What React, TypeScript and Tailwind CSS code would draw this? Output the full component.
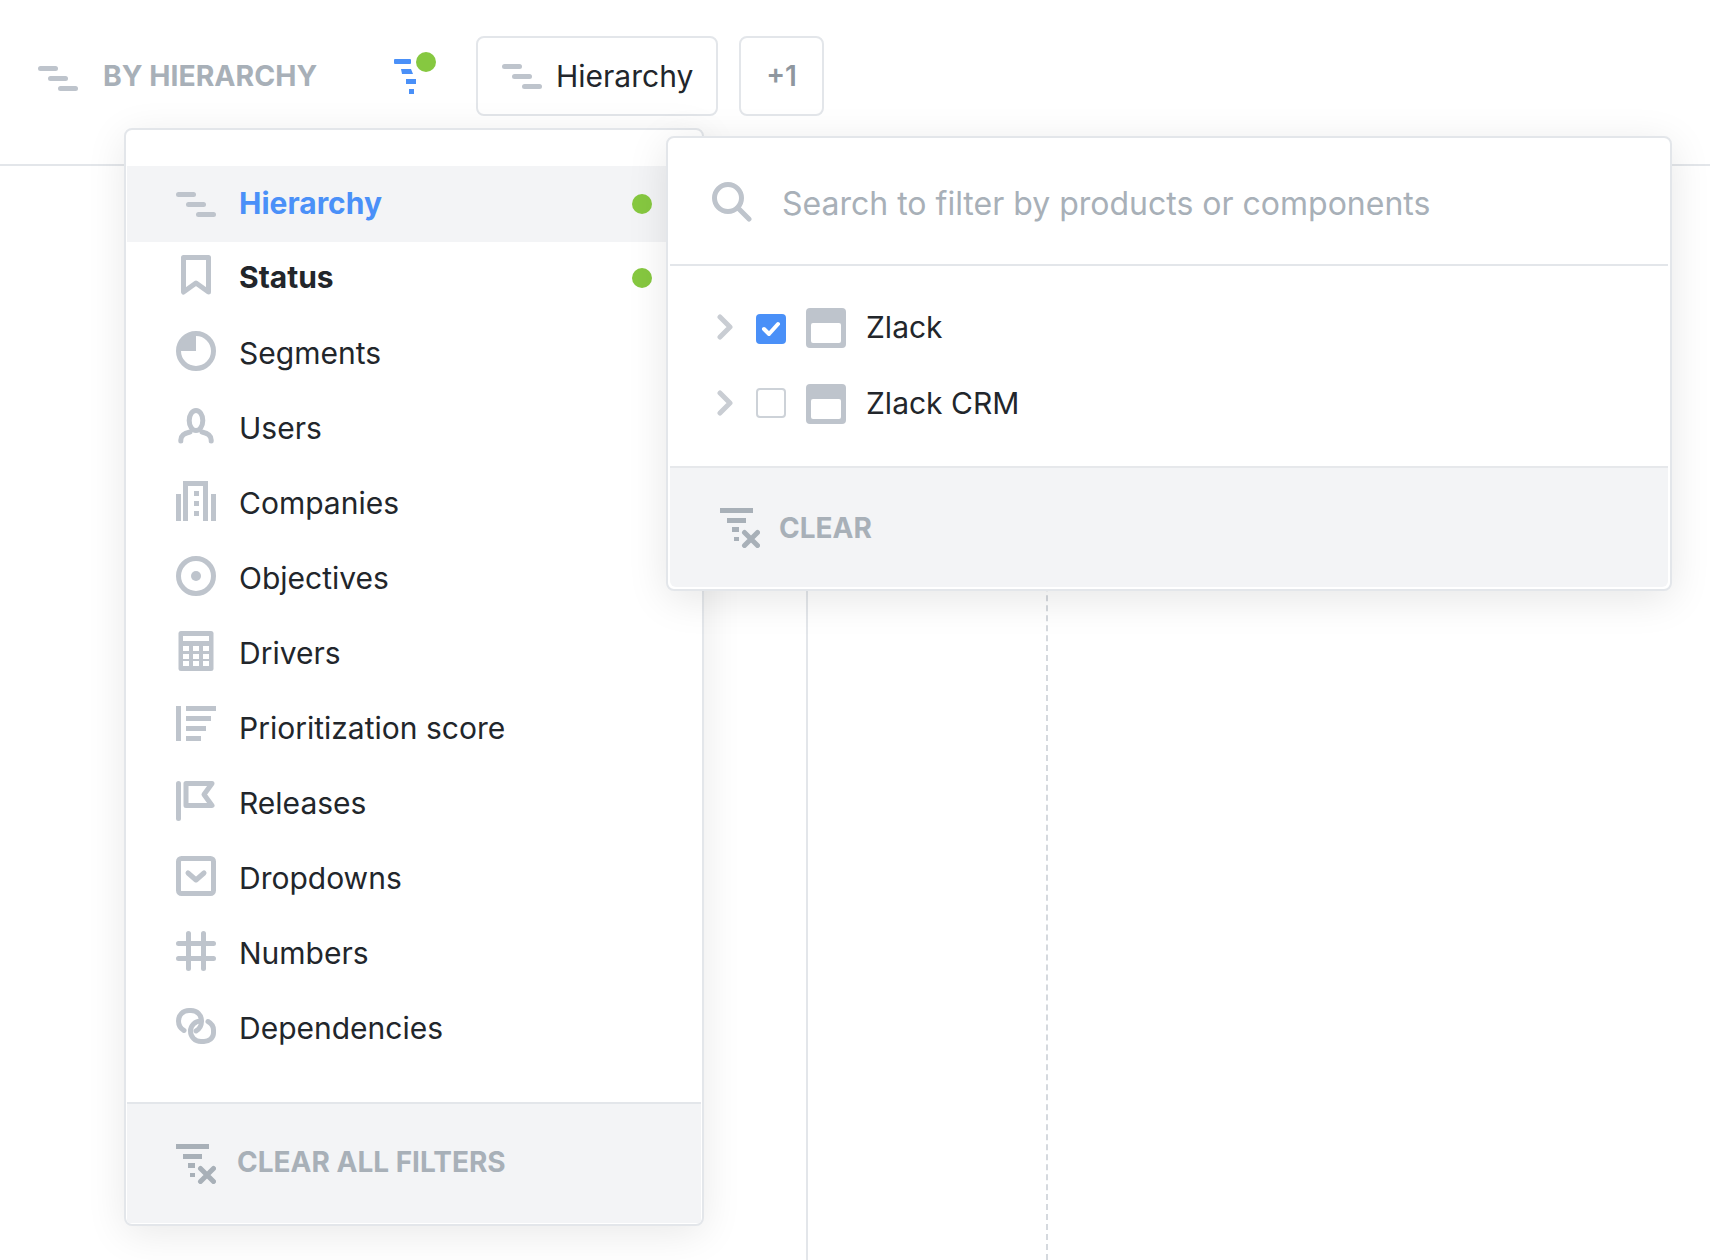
import React from "react";

const G = "#bec4cc";

function Ic({ children, w = 40, h = 40, className = "" }: { children: React.ReactNode; w?: number; h?: number; className?: string }) {
  return (
    <svg width={w} height={h} viewBox={`0 0 ${w} ${h}`} fill="none" className={`shrink-0 block ${className}`}>
      {children}
    </svg>
  );
}

const HierIcon = () => (
  <Ic h={25}>
    <rect x="0" y="0" width="20" height="5" rx="2.5" fill={G} />
    <rect x="10" y="10" width="20" height="5" rx="2.5" fill={G} />
    <rect x="20" y="20" width="20" height="5" rx="2.5" fill={G} />
  </Ic>
);

const icons: Record<string, React.ReactNode> = {
  Status: (
    <Ic>
      <path d="M7.5 2.5 H32.5 V37 L20 28 L7.5 37 Z" stroke={G} strokeWidth="5" strokeLinejoin="round" />
    </Ic>
  ),
  Segments: (
    <Ic>
      <circle cx="20" cy="20" r="17.5" stroke={G} strokeWidth="5" />
      <path d="M20 2 A18 18 0 0 0 2 20 H20 Z" fill={G} />
    </Ic>
  ),
  Users: (
    <Ic>
      <ellipse cx="20" cy="14.5" rx="6.8" ry="10" stroke={G} strokeWidth="5" />
      <path d="M4.8 35 V34 C4.8 29 9 27 14 26 M35.2 35 V34 C35.2 29 31 27 26 26" stroke={G} strokeWidth="5" strokeLinecap="round" />
    </Ic>
  ),
  Companies: (
    <Ic>
      <path d="M9.5 40 V2.5 H29.5 V40" stroke={G} strokeWidth="5" />
      <rect x="0" y="13" width="5" height="27" fill={G} />
      <rect x="35" y="13" width="5" height="27" fill={G} />
      <rect x="18" y="10" width="5" height="5" fill={G} />
      <rect x="18" y="20" width="5" height="5" fill={G} />
      <rect x="18" y="30" width="5" height="5" fill={G} />
    </Ic>
  ),
  Objectives: (
    <Ic>
      <circle cx="20" cy="20" r="17.5" stroke={G} strokeWidth="5" />
      <circle cx="20" cy="20" r="5" fill={G} />
    </Ic>
  ),
  Drivers: (
    <Ic>
      <rect x="2.5" y="0" width="35" height="40" rx="2.5" fill={G} />
      <rect x="7" y="5" width="26" height="5" fill="#fff" />
      {[7, 17, 27].map((x) =>
        [15, 23, 30].map((y) => <rect key={`${x}-${y}`} x={x} y={y} width="6" height="5" fill="#fff" />)
      )}
    </Ic>
  ),
  "Prioritization score": (
    <Ic>
      <rect x="0" y="0" width="5" height="35" fill={G} />
      <rect x="10" y="0" width="30" height="5" fill={G} />
      <rect x="10" y="10" width="25" height="5" fill={G} />
      <rect x="10" y="20" width="20" height="5" fill={G} />
      <rect x="10" y="30" width="15" height="5" fill={G} />
    </Ic>
  ),
  Releases: (
    <Ic>
      <rect x="0" y="0" width="5" height="40" rx="2.5" fill={G} />
      <path d="M10 2.5 H36 L28 13.5 L36 24.5 H10 Z" stroke={G} strokeWidth="5" strokeLinejoin="round" />
    </Ic>
  ),
  Dropdowns: (
    <Ic>
      <rect x="2.5" y="2.5" width="35" height="35" rx="3" stroke={G} strokeWidth="5" />
      <path d="M12 17 L20 24 L28 17" stroke={G} strokeWidth="5" strokeLinecap="round" strokeLinejoin="round" />
    </Ic>
  ),
  Numbers: (
    <Ic>
      <path d="M12.5 2.5 V37.5 M27.5 2.5 V37.5 M2.5 12.5 H37.5 M2.5 27.5 H37.5" stroke={G} strokeWidth="5" strokeLinecap="round" />
    </Ic>
  ),
  Dependencies: (
    <Ic h={36}>
      <path d="M8 22.5 C4.5 20.5 2.5 17 2.5 13 C2.5 7 7 2.5 13 2.5 H15 C21 2.5 25.5 7 25.5 13 C25.5 18 23.5 21 20 23" stroke={G} strokeWidth="5" strokeLinecap="round" />
      <path d="M32 13.5 C35.5 15.5 37.5 18.5 37.5 22 V25 C37.5 30 33 33.5 28 33.5 H25 C19 33.5 14.5 29 14.5 23 C14.5 17.5 19 13 25 13" stroke={G} strokeWidth="5" strokeLinecap="round" />
    </Ic>
  ),
};

const FilterClear = () => (
  <Ic>
    <rect x="0" y="0" width="33" height="5" fill="#a8b0b8" />
    <rect x="7" y="10" width="19" height="5" fill="#a8b0b8" />
    <rect x="12" y="19" width="7" height="5" fill="#a8b0b8" />
    <rect x="14" y="29" width="5" height="4" fill="#a8b0b8" />
    <path d="M24.5 24.5 L37.5 37.5 M37.5 24.5 L24.5 37.5" stroke="#a8b0b8" strokeWidth="5" strokeLinecap="round" />
  </Ic>
);

const Chevron = () => (
  <Ic w={16} h={26} className="-mt-[3px]">
    <path d="M3 3 L13 13 L3 23" stroke="#c9cdd3" strokeWidth="5" strokeLinecap="round" strokeLinejoin="round" />
  </Ic>
);

const AppIcon = () => (
  <Ic>
    <rect x="0" y="0" width="40" height="40" rx="4" fill={G} />
    <rect x="5" y="15" width="30" height="20" rx="2" fill="#fff" />
  </Ic>
);

const names = ["Segments", "Users", "Companies", "Objectives", "Drivers", "Prioritization score", "Releases", "Dropdowns", "Numbers", "Dependencies"];

export default function App() {
  return (
    <div className="relative h-[1260px] w-[1710px] overflow-hidden bg-white font-['Inter','Liberation_Sans',sans-serif] text-[30px] text-[#22262b]">
      {/* header */}
      <div className="flex h-[166px] items-start border-b-2 border-[#e3e6ea] pl-[38px] pt-[36px]">
        <div className="mt-[30px]"><HierIcon /></div>
        <span className="ml-[25px] mt-[20px] w-[214px] whitespace-nowrap text-[28.4px] leading-[40px] font-bold text-[#a8b0b8]">BY HIERARCHY</span>
        <div className="relative ml-[77px] mt-[23px] h-[36px] w-[24px]">
          <svg width="24" height="36" viewBox="0 0 24 36" className="block">
            <rect x="0" y="0" width="17" height="5" rx="1" fill="#4a90f8" />
            <path d="M7 10 H17 L19 15 H8 Z" fill="#4a90f8" />
            <rect x="12" y="20" width="10" height="5" fill="#4a90f8" />
            <rect x="15" y="30" width="5" height="5" fill="#4a90f8" />
          </svg>
          <span className="absolute left-[22px] top-[-7px] h-[20px] w-[20px] rounded-full bg-[#86c840]" />
        </div>
        <div className="ml-[58px] flex h-[80px] w-[242px] items-center gap-[14px] rounded-lg border-2 border-[#e3e6ea] pl-[24px]">
          <HierIcon />
          <span>Hierarchy</span>
        </div>
        <div className="ml-[21px] flex h-[80px] w-[85px] items-center justify-center rounded-lg border-2 border-[#e3e6ea] text-[28px] font-semibold text-[#8f979f]">+1</div>
      </div>

      {/* page behind the popovers */}
      <div className="ml-[806px] flex h-[1094px] w-[242px] border-l-2 border-r-2 border-dashed border-l-[#e3e6ea] border-r-[#d5d9de]" style={{ borderLeftStyle: "solid" }} />

      {/* main filter menu */}
      <div className="absolute left-[124px] top-[128px] flex h-[1098px] w-[580px] flex-col overflow-hidden rounded-lg border-2 border-[#e3e6ea] bg-white p-px shadow-[0_8px_40px_rgba(0,0,0,0.09)]">
        <div className="mt-[35px] flex h-[76px] items-center bg-[#f3f4f6] pl-[49px] pr-[49px]">
          <div className="w-[40px]"><HierIcon /></div>
          <span className="-mt-[2px] ml-[23px] flex-1 font-bold text-[#4a90f8]">Hierarchy</span>
          <span className="h-[20px] w-[20px] rounded-full bg-[#86c840]" />
        </div>
        <div className="flex h-[74px] items-center pl-[49px] pr-[49px]">
          <div className="-mt-[9px] w-[40px]">{icons.Status}</div>
          <span className="-mt-[4px] ml-[23px] flex-1 font-bold">Status</span>
          <span className="-mt-[2px] h-[20px] w-[20px] rounded-full bg-[#86c840]" />
        </div>
        {names.map((n) => (
          <div key={n} className="flex h-[75px] items-center pl-[49px]">
            <div className="-mt-[6px] w-[40px]">{icons[n]}</div>
            <span className="ml-[23px]">{n}</span>
          </div>
        ))}
        <div className="mt-auto flex h-[121px] items-center gap-[21px] border-t-2 border-[#e3e6ea] bg-[#f3f4f6] pl-[49px]">
          <FilterClear />
          <span className="-mt-[4px] text-[28px] font-bold text-[#a8b0b8]">CLEAR ALL FILTERS</span>
        </div>
      </div>

      {/* sub menu */}
      <div className="absolute left-[666px] top-[136px] flex h-[455px] w-[1006px] flex-col overflow-hidden rounded-lg border-2 border-[#e3e6ea] bg-white p-[2px] shadow-[0_8px_40px_rgba(0,0,0,0.1)]">
        <div className="flex h-[126px] items-center border-b-2 border-[#e3e6ea] pl-[42px]">
          <svg width="40" height="40" viewBox="0 0 40 40" fill="none" className="block shrink-0">
            <circle cx="16" cy="16" r="13.5" stroke={G} strokeWidth="5" />
            <path d="M26 26 L37 37" stroke={G} strokeWidth="5" strokeLinecap="round" />
          </svg>
          <span className="ml-[30px] mt-[4px] text-[32px] text-[#a8b0b8]">Search to filter by products or components</span>
        </div>
        <div className="flex h-[200px] flex-col pt-[24px]">
          <div className="flex h-[76px] items-center pl-[47px]">
            <Chevron />
            <span className="ml-[23px] mt-[2px] flex h-[30px] w-[30px] items-center justify-center rounded bg-[#4a90f8]">
              <svg width="20" height="16" viewBox="0 0 20 16" fill="none">
                <path d="M3 8 L8 13 L17 3" stroke="#fff" strokeWidth="4" strokeLinecap="round" strokeLinejoin="round" />
              </svg>
            </span>
            <span className="ml-[20px]"><AppIcon /></span>
            <span className="-mt-[2px] ml-[20px]">Zlack</span>
          </div>
          <div className="flex h-[76px] items-center pl-[47px]">
            <Chevron />
            <span className="ml-[23px] -mt-[2px] h-[30px] w-[30px] rounded border-2 border-[#cdd2d8]" />
            <span className="ml-[20px]"><AppIcon /></span>
            <span className="-mt-[2px] ml-[20px]">Zlack CRM</span>
          </div>
        </div>
        <div className="flex flex-1 items-center gap-[19px] rounded-b-md border-t-2 border-[#e6e8eb] bg-[#f3f4f6] pl-[50px]">
          <FilterClear />
          <span className="text-[28px] font-bold text-[#a8b0b8]">CLEAR</span>
        </div>
      </div>
    </div>
  );
}
